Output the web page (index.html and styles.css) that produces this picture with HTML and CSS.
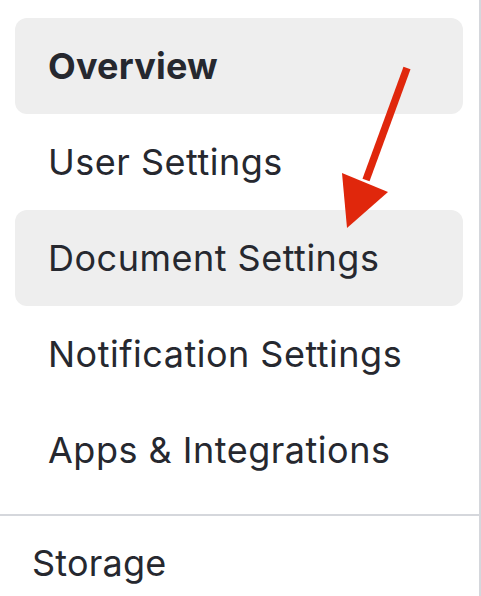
FILE: index.html
```html
<!DOCTYPE html>
<html lang="en">
<head>
    <meta charset="UTF-8">
    <meta name="viewport" content="width=device-width, initial-scale=1.0">
    <title>Settings</title>
    <link rel="stylesheet" href="styles.css">
</head>
<body>
    <nav class="sidebar">
        <ul class="nav-list">
            <li class="nav-item active">Overview</li>
            <li class="nav-item">User Settings</li>
            <li class="nav-item hover">Document Settings</li>
            <li class="nav-item">Notification Settings</li>
            <li class="nav-item">Apps &amp; Integrations</li>
        </ul>
        <div class="nav-section">Storage</div>

        <svg class="arrow" width="481" height="596" viewBox="0 0 481 596">
            <line x1="407" y1="68" x2="366" y2="180" stroke="#e0270c" stroke-width="7.5" />
            <polygon points="342,173 388,192 347,228" fill="#e0270c" />
        </svg>
    </nav>
</body>
</html>
```

FILE: styles.css
```css
* {
    margin: 0;
    padding: 0;
    box-sizing: border-box;
}

body {
    font-family: Inter, 'Noto Sans', sans-serif;
    background: #fff;
    color: #26282f;
    width: 481px;
    height: 596px;
    overflow: hidden;
}

.sidebar {
    position: relative;
    width: 481px;
    height: 596px;
    border-right: 2px solid #d5d7dc;
}

.nav-list {
    list-style: none;
    padding: 18px 16px 16px 15px;
}

.nav-item {
    height: 96px;
    display: flex;
    align-items: center;
    padding-left: 33px;
    border-radius: 12px;
    font-size: 36px;
    letter-spacing: 0.5px;
}

.nav-item.active {
    background: #eeeeee;
    font-weight: 700;
    letter-spacing: 0.2px;
}

.nav-item.hover {
    background: #eeeeee;
}

.nav-section {
    border-top: 2px solid #d5d7dc;
    height: 96px;
    display: flex;
    align-items: center;
    padding-left: 32px;
    font-size: 36px;
    letter-spacing: 0.2px;
}

.arrow {
    position: absolute;
    top: 0;
    left: 0;
    pointer-events: none;
}
```
